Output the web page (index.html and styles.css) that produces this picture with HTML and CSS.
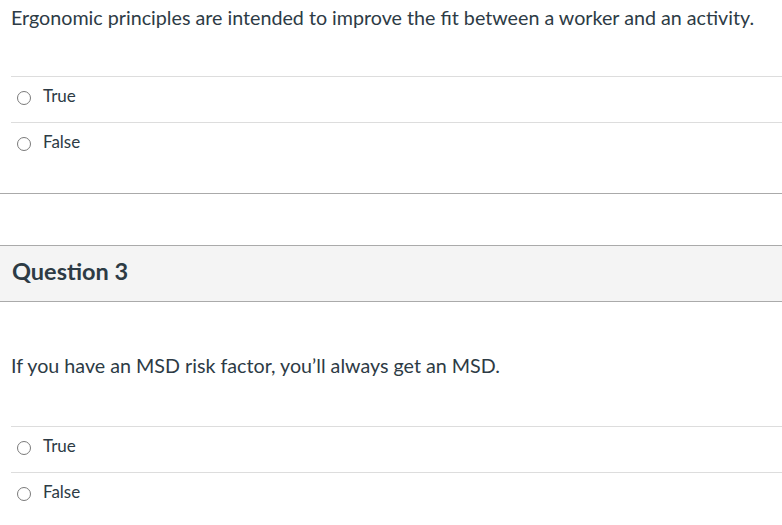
FILE: index.html
```html
<!DOCTYPE html>
<html lang="en">
<head>
<meta charset="utf-8">
<title>Quiz</title>
<link rel="stylesheet" href="styles.css">
</head>
<body>
<div class="quiz">
  <section class="question first">
    <div class="q-text">Ergonomic principles are intended to improve the fit between a worker and an activity.</div>
    <div class="answers">
      <label class="answer"><span class="radio"></span><span class="label">True</span></label>
      <label class="answer"><span class="radio"></span><span class="label">False</span></label>
    </div>
  </section>
  <section class="question">
    <header class="q-header"><h2>Question 3</h2></header>
    <div class="q-text q-text-2">If you have an MSD risk factor, you’ll always get an MSD.</div>
    <div class="answers">
      <label class="answer"><span class="radio"></span><span class="label">True</span></label>
      <label class="answer"><span class="radio"></span><span class="label">False</span></label>
    </div>
  </section>
</div>
</body>
</html>
```
FILE: styles.css
```css
html, body {
  margin: 0;
  padding: 0;
  background: #fff;
}
body {
  font-family: Lato, "Liberation Sans", sans-serif;
  color: #2d3b45;
  width: 782px;
  height: 525px;
  overflow: hidden;
}
.question.first {
  border-bottom: 1px solid #aaa;
  padding-bottom: 25px;
}
.question + .question {
  margin-top: 51px;
}
.q-text {
  font-size: 19.7px;
  line-height: 24px;
  padding: 6px 11px 0 11px;
  height: 76px;
  box-sizing: border-box;
}
.q-text-2 {
  padding-top: 52px;
  height: 124px;
}
.answers {
  margin-left: 11px;
}
.answer {
  display: flex;
  align-items: center;
  height: 46px;
  padding-bottom: 8px;
  border-top: 1px solid #ddd;
  box-sizing: border-box;
  font-size: 17px;
}
.radio {
  width: 12px;
  height: 12px;
  border: 1px solid #7a7a7a;
  border-radius: 50%;
  margin-left: 6px;
  margin-right: 12px;
  margin-top: 4px;
  flex: none;
}
.q-header {
  background: #f4f4f4;
  border-top: 1px solid #aaa;
  border-bottom: 1px solid #aaa;
  height: 57px;
  padding-bottom: 5px;
  box-sizing: border-box;
  display: flex;
  align-items: center;
  padding-left: 12px;
}
.q-header h2 {
  margin: 0;
  font-size: 23.5px;
  font-weight: 700;
}
```
